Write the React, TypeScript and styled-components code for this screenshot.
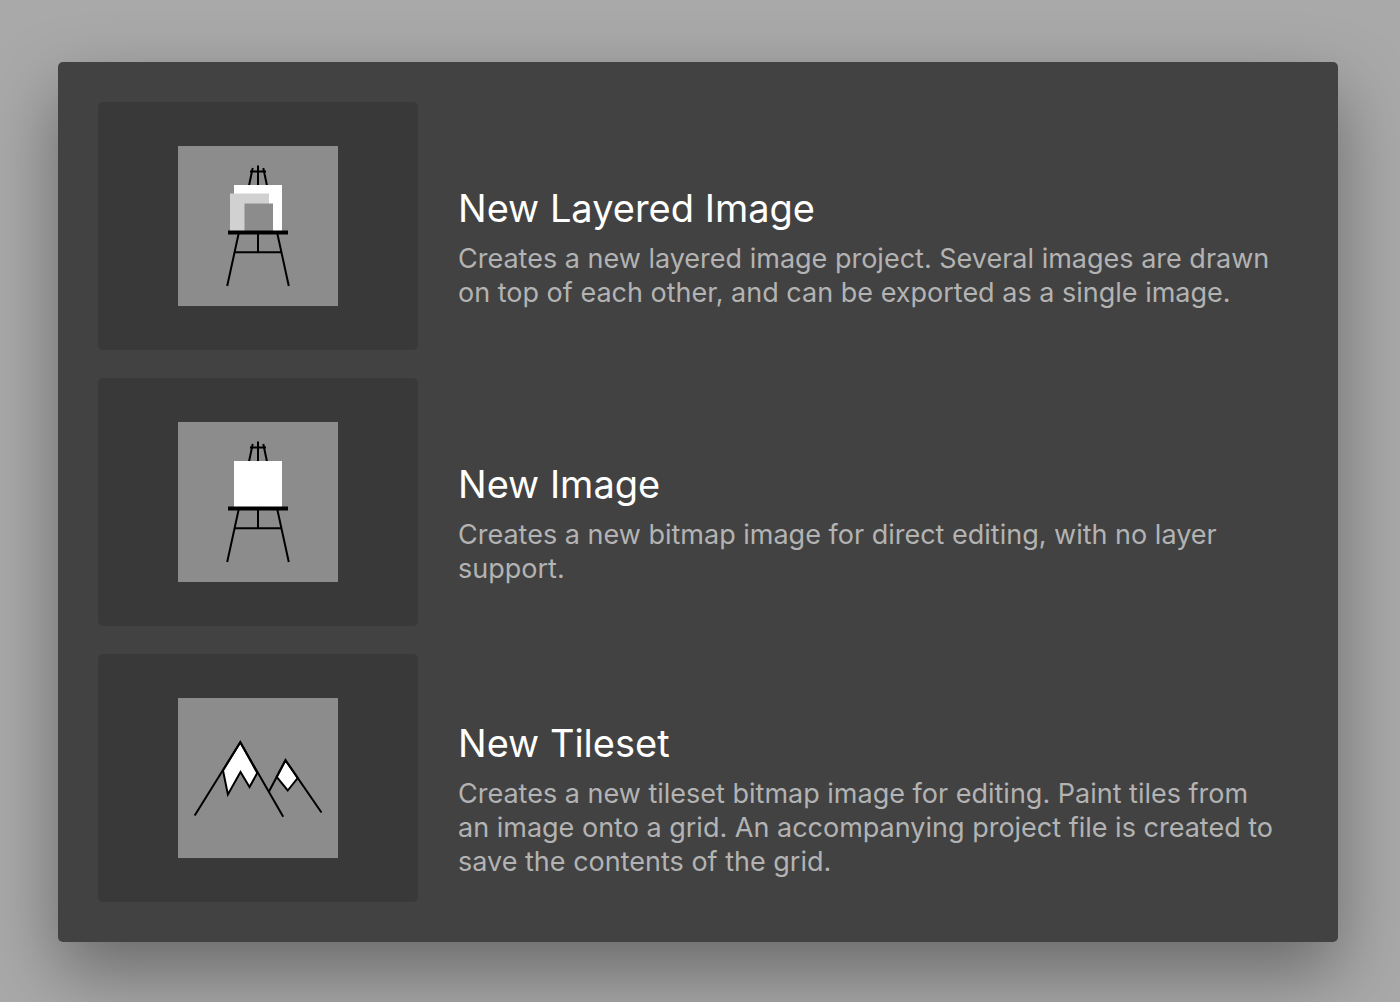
import React from "react";
import styled, { createGlobalStyle } from "styled-components";

const GlobalStyle = createGlobalStyle`
  *, *::before, *::after { box-sizing: border-box; }
  body {
    margin: 0;
    background: #a9a9a9;
    font-family: Inter, "Liberation Sans", sans-serif;
  }
`;

const Page = styled.main`
  min-height: 100vh;
  padding: 62px 62px 60px 58px;
  overflow: hidden;
`;

const Panel = styled.section`
  display: flex;
  flex-direction: column;
  gap: 28px;
  padding: 40px;
  border-radius: 5px;
  background: #424242;
  box-shadow: 0 30px 72px rgba(0, 0, 0, 0.38);
`;

const Option = styled.button`
  display: flex;
  align-items: center;
  gap: 40px;
  width: 100%;
  padding: 0;
  border: 0;
  background: none;
  font: inherit;
  text-align: left;
  cursor: pointer;
`;

const Preview = styled.span`
  display: flex;
  flex: 0 0 320px;
  align-items: center;
  justify-content: center;
  height: 248px;
  border-radius: 5px;
  background: #393939;
`;

const Picture = styled.svg`
  display: block;
  width: 160px;
  height: 160px;
  background: #8c8c8c;
`;

const Text = styled.span`
  display: flex;
  flex: 1;
  flex-direction: column;
  gap: 10px;
  min-width: 0;
  padding: 42px 18px 0 0;
`;

const Title = styled.span`
  color: #ffffff;
  font-size: 38px;
  line-height: 48px;
`;

const Description = styled.span`
  color: #b3b3b3;
  font-size: 27px;
  line-height: 34px;
`;

function Easel({ children }: { children: React.ReactNode }) {
  return (
    <Picture viewBox="0 0 160 160" aria-hidden="true">
      <g fill="none" stroke="#000" strokeWidth="2">
        <path d="M80 19.500V58M74.700 22L68 54M85.300 22L92 54M72 25.500H88" />
        <path d="M61 86L49.200 140M99 86L110.800 140M80 86V106M57 106.300H103" />
      </g>
      {children}
      <path d="M50 86.500H110" stroke="#000" strokeWidth="4" />
    </Picture>
  );
}

function LayeredImagePicture() {
  return (
    <Easel>
      <path d="M56 39H104V85H56Z" fill="#fff" />
      <path d="M52 47.500H91V85H52Z" fill="#d1d1d1" />
      <path d="M66.500 57.500H95V85H66.500Z" fill="#8c8c8c" />
    </Easel>
  );
}

function ImagePicture() {
  return (
    <Easel>
      <path d="M56 39H104V85H56Z" fill="#fff" />
    </Easel>
  );
}

function TilesetPicture() {
  return (
    <Picture viewBox="0 0 160 160" aria-hidden="true">
      <g stroke="#000" strokeWidth="2">
        <path d="M62.300 44.200L45 72.500L49.900 96.500L62.500 74L71.500 89L79.300 75Z" fill="#fff" />
        <path d="M107.500 62.200L98.700 79L109.700 92.500L119.700 80Z" fill="#fff" />
        <path d="M16.700 117.500L62.300 44.200L105.200 118.800M91 93.500L107.500 62.200L143.500 114.500" fill="none" />
      </g>
    </Picture>
  );
}

const options = [
  {
    title: "New Layered Image",
    description:
      "Creates a new layered image project. Several images are drawn on top of each other, and can be exported as a single image.",
    Art: LayeredImagePicture,
  },
  {
    title: "New Image",
    description: "Creates a new bitmap image for direct editing, with no layer support.",
    Art: ImagePicture,
  },
  {
    title: "New Tileset",
    description:
      "Creates a new tileset bitmap image for editing. Paint tiles from an image onto a grid. An accompanying project file is created to save the contents of the grid.",
    Art: TilesetPicture,
  },
];

export default function App() {
  return (
    <>
      <GlobalStyle />
      <Page>
        <Panel>
          {options.map(({ title, description, Art }) => (
            <Option key={title} type="button">
              <Preview>
                <Art />
              </Preview>
              <Text>
                <Title>{title}</Title>
                <Description>{description}</Description>
              </Text>
            </Option>
          ))}
        </Panel>
      </Page>
    </>
  );
}
